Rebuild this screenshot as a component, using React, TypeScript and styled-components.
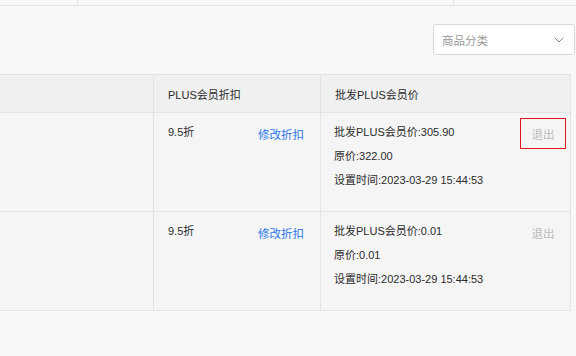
import React from "react";
import styled, { createGlobalStyle } from "styled-components";
import { ChevronDown } from "lucide-react";

const GlobalStyle = createGlobalStyle`
  html, body {
    margin: 0;
    padding: 0;
    background: #f8f8f8;
  }
  body {
    font-family: "Liberation Sans", "Noto Sans CJK SC", sans-serif;
    font-size: 11px;
    color: #2b2b2b;
  }
`;

const Page = styled.div`
  width: 576px;
  height: 356px;
  overflow: hidden;
  display: flex;
  flex-direction: column;
`;

const TabStrip = styled.div`
  height: 5px;
  border-bottom: 1px solid #e4e4e4;
  display: grid;
  grid-template-columns: 78px 376px 1fr;
`;

const TabCell = styled.div<{ $divider?: boolean }>`
  border-right: ${(p) => (p.$divider ? "1px solid #e6e6e6" : "none")};
`;

const Toolbar = styled.div`
  display: flex;
  justify-content: flex-end;
  padding: 18px 1px 19px 0;
`;

const Select = styled.div`
  width: 142px;
  height: 31px;
  box-sizing: border-box;
  border: 1px solid #d9d9d9;
  border-radius: 3px;
  background: #fff;
  display: flex;
  align-items: center;
  justify-content: space-between;
  padding: 0 7px 0 8px;
  color: #999;
  font-size: 11.5px;
`;

const Table = styled.div`
  width: 571px;
  display: grid;
  grid-template-columns: 153px 167px 250px;
  border-top: 1px solid #e3e3e3;
  border-right: 1px solid #e3e3e3;
  box-sizing: border-box;
`;

const HeadCell = styled.div<{ $first?: boolean }>`
  height: 37px;
  background: #f0f0f0;
  border-bottom: 1px solid #e3e3e3;
  border-left: ${(p) => (p.$first ? "none" : "1px solid #e3e3e3")};
  display: flex;
  align-items: center;
  padding-left: 14px;
  box-sizing: content-box;
`;

const Cell = styled.div<{ $first?: boolean }>`
  height: 98px;
  background: #f5f5f5;
  border-bottom: 1px solid #e3e3e3;
  border-left: ${(p) => (p.$first ? "none" : "1px solid #e3e3e3")};
  box-sizing: content-box;
`;

const DiscountCell = styled(Cell)`
  display: flex;
  justify-content: space-between;
  align-items: flex-start;
  padding: 7px 16px 0 14px;
  height: 91px;
`;

const LineText = styled.div`
  line-height: 24px;
  white-space: nowrap;
`;

const EditLink = styled.a`
  color: #2a76ee;
  font-size: 11.5px;
  line-height: 24px;
  margin-top: 3px;
  cursor: pointer;
`;

const PriceCell = styled(Cell)`
  display: flex;
  justify-content: space-between;
  align-items: flex-start;
  padding: 7px 4px 0 13px;
  height: 91px;
`;

const PriceLines = styled.div`
  display: flex;
  flex-direction: column;
`;

const QuitButton = styled.button<{ $focused?: boolean }>`
  width: 46px;
  height: 31px;
  box-sizing: border-box;
  border: 1px solid ${(p) => (p.$focused ? "#e0141c" : "transparent")};
  background: transparent;
  color: #bbb;
  font: inherit;
  font-size: 11.5px;
  padding: 0;
  margin-top: -2px;
  cursor: pointer;
`;

interface Row {
  discount: string;
  price: string;
  origin: string;
  time: string;
  focused?: boolean;
}

const rows: Row[] = [
  { discount: "9.5折", price: "305.90", origin: "322.00", time: "2023-03-29 15:44:53", focused: true },
  { discount: "9.5折", price: "0.01", origin: "0.01", time: "2023-03-29 15:44:53" },
];

export default function App() {
  return (
    <Page>
      <GlobalStyle />
      <TabStrip>
        <TabCell $divider />
        <TabCell $divider />
        <TabCell />
      </TabStrip>
      <Toolbar>
        <Select>
          <span>商品分类</span>
          <ChevronDown size={16} strokeWidth={1.2} color="#666" />
        </Select>
      </Toolbar>
      <Table>
        <HeadCell $first />
        <HeadCell>PLUS会员折扣</HeadCell>
        <HeadCell>批发PLUS会员价</HeadCell>
        {rows.map((r, i) => (
          <React.Fragment key={i}>
            <Cell $first />
            <DiscountCell>
              <LineText>{r.discount}</LineText>
              <EditLink>修改折扣</EditLink>
            </DiscountCell>
            <PriceCell>
              <PriceLines>
                <LineText>批发PLUS会员价:{r.price}</LineText>
                <LineText>原价:{r.origin}</LineText>
                <LineText>设置时间:{r.time}</LineText>
              </PriceLines>
              <QuitButton $focused={r.focused}>退出</QuitButton>
            </PriceCell>
          </React.Fragment>
        ))}
      </Table>
    </Page>
  );
}
